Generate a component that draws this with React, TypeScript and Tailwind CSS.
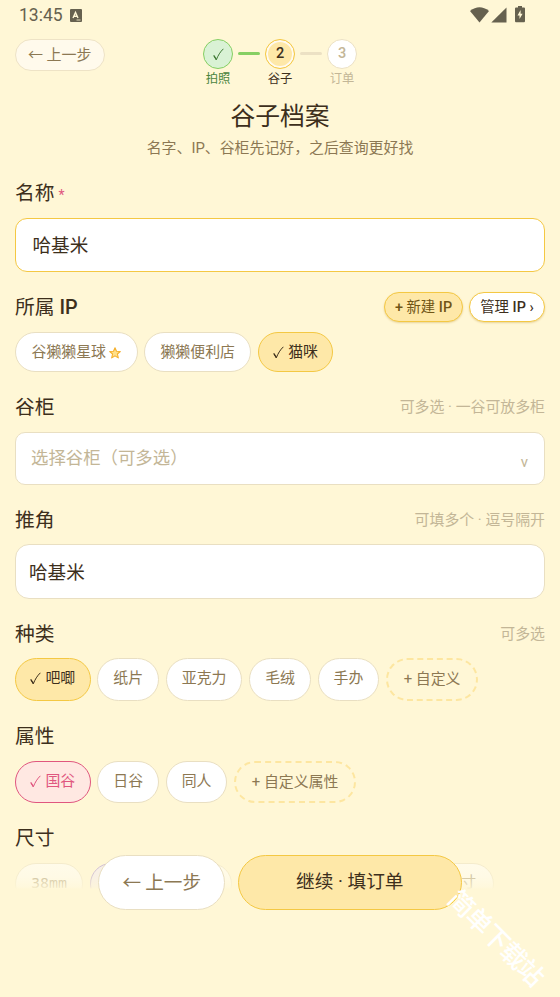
import { ReactNode } from "react";

type Tone = "plain" | "active" | "pink" | "dashed" | "purple";

type ChipItem = {
  label: string;
  width: string;
  tone?: Tone;
  star?: boolean;
};

const tones: Record<Tone, string> = {
  plain: "border-[1.5px] border-[#e9dfc2] bg-white text-[#8c7853]",
  active: "border-[1.5px] border-[#f4c843] bg-[#fee8a8] text-[#3d2f1c]",
  pink: "border-[1.5px] border-[#e0567f] bg-[#ffe8e2] text-[#e0567f]",
  dashed: "border-2 border-dashed border-[#fde6a0] text-[#8c7853] pt-[2px]",
  purple: "border-[1.5px] border-[#9b7fd0] bg-[#eee6fa] text-[#6b4fa0]",
};

const ips: ChipItem[] = [
  { label: "谷獭獭星球", width: "w-[122.5px]", star: true },
  { label: "獭獭便利店", width: "w-[107px]" },
  { label: "猫咪", width: "w-[75.5px]", tone: "active" },
];

const kinds: ChipItem[] = [
  { label: "吧唧", width: "w-[75.7px]", tone: "active" },
  { label: "纸片", width: "w-[61.7px]" },
  { label: "亚克力", width: "w-[76.7px]" },
  { label: "毛绒", width: "w-[61.8px]" },
  { label: "手办", width: "w-[61.8px]" },
  { label: "+ 自定义", width: "w-[92px]", tone: "dashed" },
];

const attributes: ChipItem[] = [
  { label: "国谷", width: "w-[75.7px]", tone: "pink" },
  { label: "日谷", width: "w-[61.7px]" },
  { label: "同人", width: "w-[61.7px]" },
  { label: "+ 自定义属性", width: "w-[122px]", tone: "dashed" },
];

function Check({ className = "" }: { className?: string }) {
  return (
    <svg viewBox="0 0 11 13" className={`h-[13px] w-[11px] shrink-0 ${className}`} fill="none" stroke="currentColor">
      <path d="M.8 7.6 3.3 11.8C5 7.5 7.2 3.8 10.4.8" strokeWidth="1" />
      <path d="M.9 7.5 3.2 11.3" strokeWidth="1.3" />
    </svg>
  );
}

function Star() {
  return (
    <svg viewBox="0 0 12 12" className="ml-[3px] h-3 w-3 shrink-0">
      <path
        d="M6 .8 7.5 4.2 11.3 4.5 8.4 7 9.3 10.9 6 8.9 2.7 10.9 3.6 7 .7 4.5 4.5 4.2Z"
        fill="#ffe08a"
        stroke="#f5b02e"
        strokeWidth="1.1"
        strokeLinejoin="round"
      />
    </svg>
  );
}

function Chip({ item, height }: { item: ChipItem; height: string }) {
  const tone = item.tone ?? "plain";
  const checked = tone === "active" || tone === "pink";
  return (
    <button
      className={`flex shrink-0 items-center justify-center rounded-full text-[14.9px] whitespace-nowrap ${height} ${item.width} ${tones[tone]}`}
    >
      {checked && <Check className="mr-[4px]" />}
      {item.label}
      {item.star && <Star />}
    </button>
  );
}

function Heading({ title, children }: { title: ReactNode; children?: ReactNode }) {
  return (
    <div className="flex h-[30px] items-center justify-between">
      <h2 className="pt-[1px] text-[19.8px] leading-[30px] text-[#3d2f1c]">{title}</h2>
      {children}
    </div>
  );
}

function Hint({ children }: { children: ReactNode }) {
  return <span className="text-[14.9px] text-[#c3b697]">{children}</span>;
}

function Step({ mark, label, circle, text }: { mark: ReactNode; label: string; circle: string; text: string }) {
  return (
    <div className="flex w-[30px] flex-col items-center">
      <div className={`flex h-[30px] w-[30px] shrink-0 items-center justify-center rounded-full text-[14.5px] font-medium ${circle}`}>
        {mark}
      </div>
      <span className={`mt-[1px] text-[12.3px] leading-[18px] whitespace-nowrap ${text}`}>{label}</span>
    </div>
  );
}

function StatusBar() {
  return (
    <div className="flex h-[30px] items-center justify-between pr-[35px] pl-[19px] text-[#66614f]">
      <div className="flex items-center gap-[7px]">
        <span className="text-[17.5px]">13:45</span>
        <svg viewBox="0 0 12 13" className="h-[13px] w-3">
          <rect width="12" height="13" rx="1" fill="currentColor" />
          <path d="M3 9 5.5 3.5 8 9M4 7.2H7" fill="none" stroke="#fff7d6" strokeWidth="1.4" />
          <path d="M6.5 11H10.5" stroke="#fff7d6" strokeWidth=".8" />
        </svg>
      </div>
      <div className="flex items-center">
        <svg viewBox="0 0 19 16" className="h-4 w-[19px]" fill="currentColor">
          <path d="M0 4Q9.5-3.5 19 4L9.5 15.6Z" />
        </svg>
        <svg viewBox="0 0 16 16" className="ml-[2px] h-4 w-4" fill="currentColor">
          <path d="M15.5.5V15.5H.3Z" />
        </svg>
        <svg viewBox="0 0 10 17" className="mb-[2px] ml-2 h-[17px] w-[10px]">
          <path d="M3 0H7V1.5H9Q10 1.5 10 2.5V15Q10 16.2 9 16.2H1Q0 16.2 0 15V2.5Q0 1.5 1 1.5H3Z" fill="currentColor" />
          <path d="M5.6 4 2.5 9.5H4.5V13L7.6 7.8H5.6Z" fill="#fff7d6" />
        </svg>
      </div>
    </div>
  );
}

export default function App() {
  return (
    <div className="relative h-[997px] w-[560px] overflow-hidden bg-[#fff7d6] font-['Roboto','Noto_Sans_CJK_SC',sans-serif] text-[#3d2f1c]">
      <StatusBar />

      {/* Back button and progress */}
      <header className="relative flex h-[48px] justify-center pt-[9px]">
        <button className="absolute top-[9px] left-[15px] flex h-8 w-[89.5px] items-center justify-center rounded-full border-[1.5px] border-[#eee3c6] bg-[#fffaec] pb-[1px] text-[15px] text-[#8c7853]">
          <span className="font-['Noto_Sans_CJK_SC',sans-serif] whitespace-pre">← 上一步</span>
        </button>
        <div className="flex">
          <Step
            mark={<Check />}
            label="拍照"
            circle="border-[1.5px] border-[#86cf63] bg-[#d9f2d5] text-[#3f7a35]"
            text="text-[#4b8540]"
          />
          <div className="mx-[5px] mt-[13px] h-[3px] w-[22px] rounded-full bg-[#86cf63]" />
          <Step
            mark={2}
            label="谷子"
            circle="border-[1.5px] border-[#f4c843] bg-[#fee8a8] shadow-[inset_0_0_0_2px_#fffaf0]"
            text="text-[#3d2f1c]"
          />
          <div className="mx-[5px] mt-[13px] h-[3px] w-[22px] rounded-full bg-[#ece1c4]" />
          <Step
            mark={3}
            label="订单"
            circle="border-[1.5px] border-[#ece1c4] bg-white text-[#c3b697]"
            text="text-[#c3b697]"
          />
        </div>
      </header>

      <div className="mt-[21px] text-center">
        <h1 className="text-[24.8px] leading-[36px]">谷子档案</h1>
        <p className="mt-[2px] text-[14.9px] leading-[22px] text-[#8c7853]">名字、IP、谷柜先记好，之后查询更好找</p>
      </div>

      <main className="mt-[20px] px-[15px]">
        {/* Name */}
        <section>
          <Heading
            title={
              <>
                名称<span className="ml-[4px] text-[14px] text-[#e0567f]">*</span>
              </>
            }
          />
          <div className="mt-[9px] flex h-[54px] items-center rounded-[12px] border-[1.5px] border-[#f4c843] bg-white pt-[4px] pl-[16.5px] text-[18.6px]">
            哈基米
          </div>
        </section>

        {/* IP */}
        <section className="mt-5">
          <Heading
            title={
              <>
                所属 <span className="font-medium">IP</span>
              </>
            }
          >
            <div className="flex gap-[6px] text-[14.4px] font-medium">
              <button className="flex h-[30px] w-[79px] items-center justify-center rounded-full border-[1.5px] border-[#f4c843] bg-[#fee8a8] pt-[1px] text-[#705516] shadow-[0_1px_2px_#e8d49a]">
                <span>+ <span className="font-normal">新建</span> IP</span>
              </button>
              <button className="flex h-[30px] w-[76px] items-center justify-center rounded-full border-[1.5px] border-[#f4c843] bg-white pt-[1px] shadow-[0_1px_2px_#e8d49a]">
                <span><span className="font-normal">管理</span> IP ›</span>
              </button>
            </div>
          </Heading>
          <div className="mt-[10px] flex gap-[6.7px]">
            {ips.map((item) => (
              <Chip key={item.label} item={item} height="h-[40px] pt-[1px]" />
            ))}
          </div>
        </section>

        {/* Cabinet */}
        <section className="mt-5">
          <Heading title="谷柜">
            <Hint>可多选 · 一谷可放多柜</Hint>
          </Heading>
          <div className="mt-[10px] flex h-[53px] items-center justify-between rounded-[10px] border-[1.5px] border-[#e9dfc2] bg-white pr-[16px] pl-[15px] text-[17.4px] text-[#c3b697]">
            <span>选择谷柜（可多选）</span>
            <span className="pt-[7px] text-[15px]">v</span>
          </div>
        </section>

        {/* Character */}
        <section className="mt-5">
          <Heading title="推角">
            <Hint>可填多个 · 逗号隔开</Hint>
          </Heading>
          <div className="mt-[9px] flex h-[55px] items-center rounded-[14px] border-[1.5px] border-[#e9dfc2] bg-white pt-[4px] pl-[13px] text-[18.6px]">
            哈基米
          </div>
        </section>

        <section className="mt-5">
          <Heading title="种类">
            <Hint>可多选</Hint>
          </Heading>
          <div className="mt-[9px] flex gap-[6.7px]">
            {kinds.map((item) => (
              <Chip key={item.label} item={item} height="h-[43px] pb-[2px]" />
            ))}
          </div>
        </section>

        <section className="mt-5">
          <Heading title="属性" />
          <div className="mt-[10px] flex gap-[6.7px]">
            {attributes.map((item) => (
              <Chip key={item.label} item={item} height="h-[42px] pb-[2px]" />
            ))}
          </div>
        </section>

        {/* Size row runs under the bottom bar */}
        <section className="mt-5">
          <Heading title="尺寸" />
          <div className="mt-[10px] flex gap-[7px]">
            <button className={`h-[42px] w-[68px] shrink-0 rounded-full pb-[3px] font-['Noto_Sans_Mono','Liberation_Mono',monospace] text-[15px] ${tones.plain}`}>
              38mm
            </button>
            <Chip item={{ label: "", width: "w-[68px]", tone: "purple" }} height="h-[42px]" />
            <Chip item={{ label: "", width: "w-[67px]" }} height="h-[42px]" />
            <Chip item={{ label: "", width: "w-[135px]" }} height="h-[42px]" />
            <Chip item={{ label: "自定义尺寸", width: "w-[113px]" }} height="h-[42px] pl-[3px] pb-[4px]" />
          </div>
        </section>
      </main>

      {/* Bottom bar */}
      <footer className="absolute inset-x-0 bottom-0 flex h-[152px] justify-center gap-[12.5px] bg-[linear-gradient(to_bottom,#fff7d600_0px,#fff7d680_16px,#fff7d6a0_32px,#fff7d6d8_42px,#fff7d6_44px)] pt-[10px]">
        <button className="flex h-[55px] w-[127px] items-center justify-center rounded-full border-[1.5px] border-[#e9dfc2] bg-white pb-[4px] font-['Noto_Sans_CJK_SC',sans-serif] text-[18.6px] text-[#8c7853]">
          ← 上一步
        </button>
        <button className="flex h-[55px] w-[224px] items-center justify-center rounded-full border-[1.5px] border-[#f4c843] bg-[#fee8a8] text-[18.7px]">
          继续 · 填订单
        </button>
      </footer>

      <div className="absolute top-[918px] left-[426px] w-[140px] rotate-45 text-center text-[25.5px] leading-[40px] tracking-[-1px] font-medium whitespace-nowrap text-white">
        简单下载站
      </div>
    </div>
  );
}
